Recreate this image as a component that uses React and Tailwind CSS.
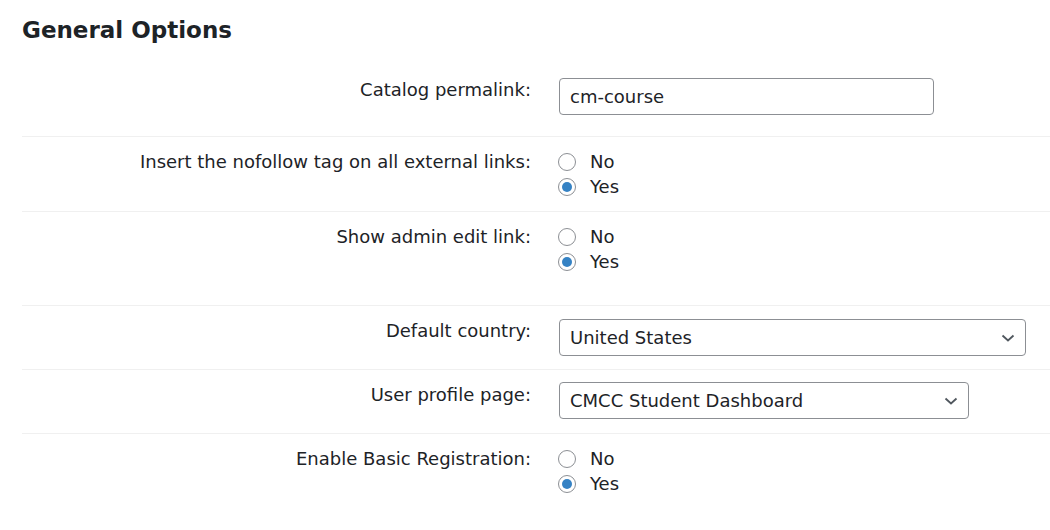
import React, { useState } from "react";

const font = { fontFamily: '"DejaVu Sans", Verdana, sans-serif' };

// Radio pair (No / Yes)
const RadioGroup = ({ name, value, onChange }) => (
  <div className="flex flex-col">
    {["No", "Yes"].map((opt) => (
      <label key={opt} className="flex items-center h-[25px] cursor-pointer">
        <input
          type="radio"
          name={name}
          checked={value === opt}
          onChange={() => onChange(opt)}
          className="sr-only"
        />
        <span className="w-[18px] h-[18px] -ml-[1px] rounded-full border border-[#8c8f94] bg-white flex items-center justify-center">
          {value === opt && <span className="w-[10px] h-[10px] rounded-full bg-[#3582c4]" />}
        </span>
        <span className="ml-[14px] text-[18px] leading-[25px]">{opt}</span>
      </label>
    ))}
  </div>
);

const Chevron = () => (
  <svg
    width="14"
    height="8"
    viewBox="0 0 14 8"
    className="pointer-events-none absolute top-1/2 -translate-y-1/2 right-[11px]"
  >
    <path d="M1.5 1.5 L7 6.5 L12.5 1.5" fill="none" stroke="#50575e" strokeWidth="1.8" />
  </svg>
);

const Row = ({ label, height, children, border = true }) => (
  <div
    className={`flex ${border ? "border-t border-[#f0f0f0]" : ""}`}
    style={{ minHeight: height }}
  >
    <div className="w-[509px] shrink-0 text-right pt-[12px] leading-[25px] text-[18px]">
      {label}
    </div>
    <div className="ml-[28px] pt-[12px] flex-1">{children}</div>
  </div>
);

export default function App() {
  const [permalink, setPermalink] = useState("cm-course");
  const [nofollow, setNofollow] = useState("Yes");
  const [adminLink, setAdminLink] = useState("Yes");
  const [country, setCountry] = useState("United States");
  const [profile, setProfile] = useState("CMCC Student Dashboard");
  const [basicReg, setBasicReg] = useState("Yes");

  return (
    <div className="bg-white text-[#1d2327] w-[1050px] h-[530px] overflow-hidden pl-[22px]" style={font}>
      <h2 className="text-[23px] font-bold leading-[30px] pt-[15px]">General Options</h2>

      <div className="mt-[20px]">
        <Row label="Catalog permalink:" height={71} border={false}>
          <input
            type="text"
            value={permalink}
            onChange={(e) => setPermalink(e.target.value)}
            className="mt-[1px] w-[375px] h-[37px] border border-[#8c8f94] rounded-[4px] px-[10px] text-[18px] outline-none"
            style={font}
          />
        </Row>

        <Row label="Insert the nofollow tag on all external links:" height={75}>
          <RadioGroup name="nofollow" value={nofollow} onChange={setNofollow} />
        </Row>

        <Row label="Show admin edit link:" height={94}>
          <RadioGroup name="adminlink" value={adminLink} onChange={setAdminLink} />
        </Row>

        <Row label="Default country:" height={64}>
          <div className="relative w-[467px] mt-[1px]">
            <select
              value={country}
              onChange={(e) => setCountry(e.target.value)}
              className="appearance-none w-full h-[37px] border border-[#8c8f94] rounded-[4px] pl-[10px] pr-8 text-[18px] bg-white outline-none"
              style={font}
            >
              <option>United States</option>
              <option>Canada</option>
              <option>United Kingdom</option>
            </select>
            <Chevron />
          </div>
        </Row>

        <Row label="User profile page:" height={64}>
          <div className="relative w-[410px]">
            <select
              value={profile}
              onChange={(e) => setProfile(e.target.value)}
              className="appearance-none w-full h-[37px] border border-[#8c8f94] rounded-[4px] pl-[10px] pr-8 text-[18px] bg-white outline-none"
              style={font}
            >
              <option>CMCC Student Dashboard</option>
              <option>My Account</option>
            </select>
            <Chevron />
          </div>
        </Row>

        <Row label="Enable Basic Registration:" height={96}>
          <RadioGroup name="basicreg" value={basicReg} onChange={setBasicReg} />
        </Row>
      </div>
    </div>
  );
}
